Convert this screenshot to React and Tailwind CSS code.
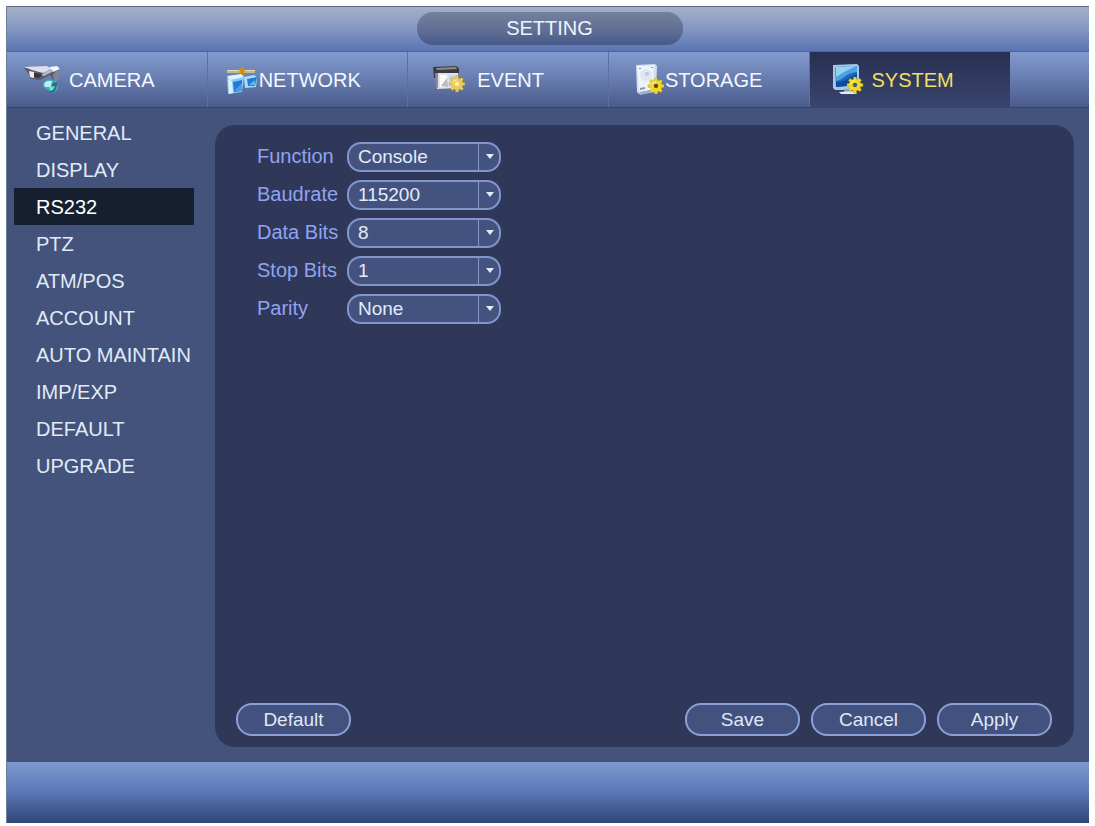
import React from "react";

function Gear({ cx, cy, r = 6, fill = "#f2dc3c", hole = "#8a6a1c" }) {
  const teeth = [0, 45, 90, 135, 180, 225, 270, 315];
  return (
    <g transform={`translate(${cx} ${cy})`}>
      {teeth.map((angle) => (
        <rect
          key={angle}
          x={-1.5}
          y={-r - 2}
          width={3}
          height={4}
          rx={0.6}
          fill={fill}
          stroke="#b08a1e"
          strokeWidth={0.4}
          transform={`rotate(${angle})`}
        />
      ))}
      <circle r={r} fill={fill} />
      <circle r={r * 0.36} fill={hole} />
      <path d={`M${-r * 0.7} ${-r * 0.2}A${r * 0.7} ${r * 0.7} 0 0 1 0 ${-r * 0.7}`} fill="none" stroke="#fff7a8" strokeWidth={1} />
    </g>
  );
}

function CameraIcon() {
  return (
    <svg width="38" height="32" viewBox="0 0 38 32" aria-hidden="true">
      <path d="M1 4 10 3 13 7 22 9 35 5 36 14 31 17 27 11 17 16 8 15 5 9Z" fill="#5a5c6e" />
      <path d="M1 3 24 2 28 5 20 9 9 6Z" fill="#dde0ea" />
      <path d="M6 7 11 8 11 14 7 13Z" fill="#eceef3" />
      <path d="M11 9 20 10 16 14 11 13Z" fill="#38333d" />
      <path d="M26 3 34 2 37 5 30 8Z" fill="#f5f6fa" />
      <path d="M27 5 31 7 21 12 18 11Z" fill="#b3b8c8" />
      <path d="M33 7 37 5 36 15 31 17 30 11Z" fill="#7d8496" />
      <path d="M20 20Q22 15 28 16L34 17Q37 24 32 28L27 30 25 26Q20 25 20 20Z" fill="#43a9bd" />
      <path d="M21 20Q23 16 29 17L28 23 22 23Z" fill="#b6f0f3" />
      <path d="M30 19 35 18 32 27 27 30 26 26Z" fill="#206f8b" />
      <path d="M26 23 32 22 30 26 27 27Z" fill="#7fdcdc" />
    </svg>
  );
}

function NetworkIcon() {
  return (
    <svg width="31" height="30" viewBox="0 0 31 30" aria-hidden="true">
      <path d="M1 5H29V8H1Z" fill="#b9b99e" />
      <path d="M1 5H29V6H1Z" fill="#ecdf9f" />
      <path d="M16 2 20 6 17 10 12 6Z" fill="#e9a91e" />
      <path d="M14 3H18V12H15Z" fill="#c98b17" />
      <path d="M1 12 16 10 18 13 16 27 2 29Z" fill="#86cbf3" />
      <path d="M1 11 15 9 18 12 4 15Z" fill="#dbf3fc" />
      <path d="M7 17 16 15 16 26 8 27Z" fill="#2378d8" />
      <path d="M8 26 16 18 16 26Z" fill="#459fe8" />
      <path d="M2 14 6 16 7 28 3 29Z" fill="#dceef8" />
      <path d="M18 12 28 10 31 12 30 22 19 23Z" fill="#a8def8" />
      <path d="M21 14 31 12 29 21 22 21Z" fill="#237cda" />
      <path d="M23 20 29 15 29 20Z" fill="#5dbaf2" />
    </svg>
  );
}

function EventIcon() {
  return (
    <svg width="33" height="29" viewBox="0 0 33 29" aria-hidden="true">
      <path d="M3 6H26V23L5 24Z" fill="#dfe2eb" />
      <path d="M1 2 24 1 27 3V8H5V13H2Z" fill="#3b3a40" />
      <path d="M4 3 24 2 25 4 5 5Z" fill="#8d8a88" />
      <path d="M3 8H6V23L4 22Z" fill="#8e8996" />
      <path d="M8 10H15V22H8Z" fill="#fafafa" />
      <path d="M17 10H25V17H17Z" fill="#cdd3e1" />
      <path d="M9 21 15 13 16 22Z" fill="#bbb8c6" />
      <Gear cx={25} cy={19} r={6} fill="#e9cc58" hole="#fff3a4" />
    </svg>
  );
}

function StorageIcon() {
  return (
    <svg width="30" height="33" viewBox="0 0 30 33" aria-hidden="true">
      <path d="M1 2 20 1 22 3 21 29 4 31 2 29Z" fill="#d3deee" />
      <path d="M2 3 19 2 18 27 4 29Z" fill="#edf3fa" />
      <circle cx="11" cy="12" r="6" fill="#e0e7ef" />
      <circle cx="12" cy="11" r="2" fill="#bfc8d6" />
      <path d="M4 5H6V6H4ZM16 4H18V5H16ZM5 25 10 24 10 26 5 27Z" fill="#8793ac" />
      <path d="M4 29 15 27 15 30 5 32Z" fill="#9faec9" />
      <Gear cx={21} cy={23} r={6} fill="#efd72c" hole="#5c4a16" />
    </svg>
  );
}

function SystemIcon() {
  return (
    <svg width="32" height="33" viewBox="0 0 32 33" aria-hidden="true">
      <path d="M1 2 25 1 27 3V24L17 27 3 27 1 25Z" fill="#a7c9e6" />
      <path d="M3 4 25 3V22L4 24Z" fill="#176bc0" />
      <path d="M3 4 25 3V9Q16 10 11 15 7 18 4 18Z" fill="#4ca3e1" />
      <path d="M4 4 24 3 12 9 4 14Z" fill="#96d3f3" />
      <path d="M4 19Q12 19 17 15L25 11V22L4 24Z" fill="#0b4aa0" />
      <path d="M12 26H19V29H12Z" fill="#8aa0bd" />
      <path d="M7 29 22 28 25 31 9 31Z" fill="#e3edf4" />
      <Gear cx={23} cy={22} r={6} fill="#f1d827" hole="#37588a" />
    </svg>
  );
}

const tabs = [
  { name: "CAMERA", Icon: CameraIcon, layout: "pl-4 gap-2" },
  { name: "NETWORK", Icon: NetworkIcon, layout: "pl-[18px] gap-[2px]" },
  { name: "EVENT", Icon: EventIcon, layout: "pl-6 gap-3" },
  { name: "STORAGE", Icon: StorageIcon, layout: "pl-[26px] gap-0" },
  { name: "SYSTEM", Icon: SystemIcon, layout: "pl-[22px] gap-2" },
];

const sections = [
  "GENERAL",
  "DISPLAY",
  "RS232",
  "PTZ",
  "ATM/POS",
  "ACCOUNT",
  "AUTO MAINTAIN",
  "IMP/EXP",
  "DEFAULT",
  "UPGRADE",
];

const fields = [
  { id: "function", label: "Function", options: ["Console", "Keyboard"] },
  { id: "baudrate", label: "Baudrate", options: ["115200", "57600", "9600"] },
  { id: "data-bits", label: "Data Bits", options: ["8", "7", "6", "5"] },
  { id: "stop-bits", label: "Stop Bits", options: ["1", "2"] },
  { id: "parity", label: "Parity", options: ["None", "Odd", "Even"] },
];

function Tab({ name, Icon, layout, active }) {
  return (
    <button
      type="button"
      role="tab"
      aria-selected={active}
      className={`flex items-center text-xl ${layout} ${
        active
          ? "bg-linear-to-b from-[#273052] to-[#3a456d] text-[#f3df63]"
          : "border-r border-[#5d70a2] text-[#f4f8ff]"
      }`}
    >
      <Icon />
      <span>{name}</span>
    </button>
  );
}

function Field({ id, label, options }) {
  return (
    <div className="flex items-start">
      <label htmlFor={id} className="w-[90px] text-xl leading-7 text-[#91a3f0]">
        {label}
      </label>
      <div className="relative">
        <select
          id={id}
          className="block h-[30px] w-[154px] appearance-none rounded-[14px] border-2 border-[#8296cc] bg-[#43527f] pl-[9px] pr-7 text-[19px] leading-[26px] text-[#e3ecf8] outline-none"
        >
          {options.map((option) => (
            <option key={option}>{option}</option>
          ))}
        </select>
        <span className="pointer-events-none absolute inset-y-0 right-0 flex w-[23px] items-center border-l border-[#8296cc] pl-[6px]">
          <svg width="10" height="6" viewBox="0 0 10 6" aria-hidden="true">
            <path d="M1 0H9L5 5Z" fill="#e3ecf8" />
          </svg>
        </span>
      </div>
    </div>
  );
}

function PillButton({ children }) {
  return (
    <button
      type="button"
      className="h-[33px] w-[115px] rounded-[16px] border-2 border-[#8ba0d6] bg-[#43517e] text-[19px] leading-7 text-[#dfe8f8]"
    >
      {children}
    </button>
  );
}

export default function App() {
  return (
    <div className="flex min-h-screen flex-col bg-white px-[6px] pt-[6px] pb-[3px] font-['Liberation_Sans',Arial,sans-serif]">
      <div className="flex grow flex-col border-l border-[#6d7c98] bg-[#44537c]">
        <header className="flex h-[46px] justify-center border-t border-b border-t-[#626d84] border-b-[#50649b] bg-linear-to-b from-[#a4afc9] via-[#8497c4] via-50% to-[#5b75b3] pt-[5px] pl-[3px]">
          <h1 className="h-[33px] w-[266px] rounded-[16px] bg-linear-to-b from-[#73809d] via-[#5e6d93] via-60% to-[#485989] text-center text-xl leading-8 text-[#eef4fc]">
            SETTING
          </h1>
        </header>

        <div
          role="tablist"
          className="grid h-14 grid-cols-[repeat(5,201fr)_79fr] border-b border-[#35436d] bg-linear-to-b from-[#849bd0] via-[#677cae] via-50% to-[#495b8b]"
        >
          {tabs.map((tab) => (
            <Tab key={tab.name} {...tab} active={tab.name === "SYSTEM"} />
          ))}
        </div>

        <div className="flex grow">
          <nav className="w-[208px] shrink-0 pt-[6px] pl-[7px]">
            {sections.map((section) => (
              <a
                key={section}
                href="#"
                className={`flex h-[37px] w-[180px] items-center pl-[22px] text-xl whitespace-nowrap ${
                  section === "RS232" ? "bg-[#161f2f] text-white" : "text-[#e0ebf8]"
                }`}
              >
                {section}
              </a>
            ))}
          </nav>

          <main className="mt-[17px] mr-[15px] mb-[15px] flex grow flex-col justify-between rounded-[20px] bg-[#30385a] pt-[17px] pr-[22px] pb-[11px] pl-[21px]">
            <form className="flex flex-col gap-2 pl-[21px]">
              {fields.map((field) => (
                <Field key={field.id} {...field} />
              ))}
            </form>
            <div className="flex justify-between">
              <PillButton>Default</PillButton>
              <div className="flex gap-[11px]">
                <PillButton>Save</PillButton>
                <PillButton>Cancel</PillButton>
                <PillButton>Apply</PillButton>
              </div>
            </div>
          </main>
        </div>

        <footer className="h-[61px] bg-linear-to-b from-[#7d99cc] via-[#5f7cbb] via-45% to-[#304676]" />
      </div>
    </div>
  );
}
